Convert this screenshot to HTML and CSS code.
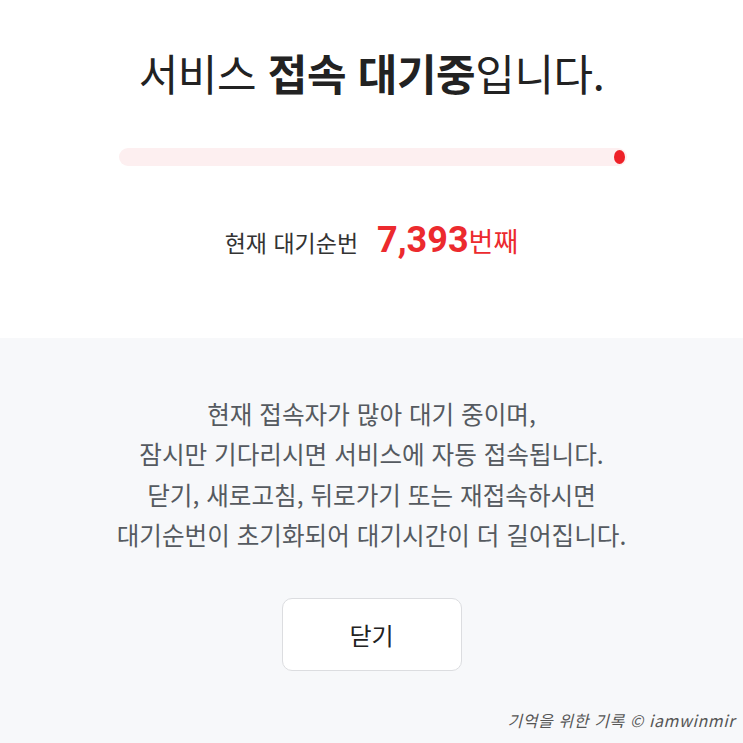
FILE: index.html
```html
<!DOCTYPE html>
<html lang="ko">
<head>
  <meta charset="UTF-8">
  <title>서비스 접속 대기중</title>
  <link rel="stylesheet" href="styles.css">
</head>
<body>

  <div class="대기">
    <section class="상단">
      <h1 class="제목">서비스 <b>접속 대기중</b>입니다.</h1>

      <div class="진행바">
        <span class="진행바-점"></span>
      </div>

      <p class="순번">
        <span class="순번-라벨">현재 대기순번</span>
        <span class="순번-값"><b>7,393</b>번째</span>
      </p>
    </section>

    <section class="하단">
      <p class="안내">현재 접속자가 많아 대기 중이며,<br>잠시만 기다리시면 서비스에 자동 접속됩니다.</p>
      <p class="안내">닫기, 새로고침, 뒤로가기 또는 재접속하시면<br>대기순번이 초기화되어 대기시간이 더 길어집니다.</p>

      <button class="닫기">닫기</button>

      <div class="서명">기억을 위한 기록 © iamwinmir</div>
    </section>
  </div>

</body>
</html>
```

FILE: styles.css
```css
* { box-sizing: border-box; }
body, html {
  margin: 0;
  height: 100%;
  font-family: "Noto Sans CJK KR", "Noto Sans", sans-serif;
}

.대기 {
  display: flex;
  flex-direction: column;
  height: 100vh;
}

.상단 {
  height: 338px;
  background: #fff;
  display: flex;
  flex-direction: column;
  align-items: center;
  padding-top: 40px;
}

.제목 {
  margin: 0;
  font-size: 43px;
  font-weight: 400;
  color: #222;
  line-height: 64px;
  letter-spacing: -0.4px;
}

.제목 b {
  font-weight: 700;
}

.진행바 {
  position: relative;
  width: 508px;
  height: 18px;
  margin-top: 44px;
  margin-left: 3px;
  border-radius: 9px;
  background: #fdeff0;
}

.진행바-점 {
  position: absolute;
  right: 2px;
  top: 2px;
  width: 11px;
  height: 14px;
  border-radius: 50%;
  background: #ee2128;
}

.순번 {
  margin: 53px 0 0;
  display: flex;
  align-items: baseline;
  gap: 19px;
}

.순번-라벨 {
  font-size: 23px;
  color: #333;
}

.순번-값 {
  font-size: 27px;
  color: #ec2a2e;
}

.순번-값 b {
  font-family: "Roboto", "Noto Sans", sans-serif;
  font-size: 36px;
  font-weight: 700;
}

.하단 {
  flex: 1;
  position: relative;
  background: #f7f8fa;
  display: flex;
  flex-direction: column;
  align-items: center;
  padding-top: 55px;
}

.안내 {
  margin: 0 0 1px;
  font-size: 24.6px;
  line-height: 40px;
  color: #555a60;
  text-align: center;
}

.닫기 {
  margin-top: 43px;
  width: 180px;
  height: 73px;
  border: 1px solid #dcdde0;
  border-radius: 10px;
  background: #fff;
  font-family: inherit;
  font-size: 24px;
  color: #222;
}

.서명 {
  position: absolute;
  right: 8px;
  bottom: 11px;
  font-size: 16px;
  font-style: italic;
  letter-spacing: 0.6px;
  color: #555;
}
```
